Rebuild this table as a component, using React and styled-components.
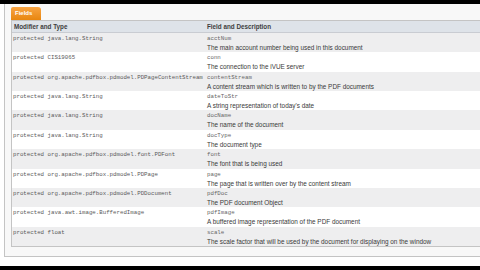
import React from "react";
import styled, { createGlobalStyle } from "styled-components";

const fields = [
  ["protected java.lang.String", "acctNum", "The main account number being used in this document"],
  ["protected CIS19065", "conn", "The connection to the iVUE server"],
  ["protected org.apache.pdfbox.pdmodel.PDPageContentStream", "contentStream", "A content stream which is written to by the PDF documents"],
  ["protected java.lang.String", "dateToStr", "A string representation of today's date"],
  ["protected java.lang.String", "docName", "The name of the document"],
  ["protected java.lang.String", "docType", "The document type"],
  ["protected org.apache.pdfbox.pdmodel.font.PDFont", "font", "The font that is being used"],
  ["protected org.apache.pdfbox.pdmodel.PDPage", "page", "The page that is written over by the content stream"],
  ["protected org.apache.pdfbox.pdmodel.PDDocument", "pdfDoc", "The PDF document Object"],
  ["protected java.awt.image.BufferedImage", "pdfImage", "A buffered image representation of the PDF document"],
  ["protected float", "scale", "The scale factor that will be used by the document for displaying on the window"],
];

const App = () => {
  return (
    <>
      <Global />
      <Screen>
        <Box>
          <Tab>Fields</Tab>
          <Table>
            <Header>
              <HeadCell>Modifier and Type</HeadCell>
              <HeadCell>Field and Description</HeadCell>
            </Header>
            {fields.map((f, i) => (
              <Row key={f[1]} $alt={i % 2 === 0}>
                <TypeCell>{f[0]}</TypeCell>
                <DescCell>
                  <Code>{f[1]}</Code>
                  <Text>{f[2]}</Text>
                </DescCell>
              </Row>
            ))}
          </Table>
        </Box>
      </Screen>
    </>
  );
};

export default App;

const Global = createGlobalStyle`
  html, body {
    margin: 0;
    padding: 0;
    background: #fff;
    overflow: hidden;
  }
`;

const Screen = styled.div`
  height: 270px;
  border-top: 4px solid #000;
  border-bottom: 4px solid #000;
  padding-left: 4px;
  box-sizing: border-box;
  background: #fff;
  overflow: hidden;
`;

const Box = styled.div`
  width: 600px;
  background: #f8f8f8;
  border-left: 1px solid #c4c4c4;
  border-bottom: 1px solid #c4c4c4;
  padding: 3px 0 9px 6px;
  font-family: "Liberation Sans", Arial, sans-serif;
`;

const Tab = styled.div`
  width: 30px;
  height: 13px;
  box-sizing: border-box;
  padding-left: 4px;
  background: linear-gradient(#f8a443, #e8860f);
  border-radius: 2px 3px 0 0;
  color: #fff;
  font-weight: bold;
  font-size: 6px;
  line-height: 13px;
`;

const Table = styled.div`
  border: 1px solid #c4c4c4;
  border-right: none;
  background: #fff;
`;

const Header = styled.div`
  display: grid;
  grid-template-columns: 193px 1fr;
  height: 11px;
  background: #dee3e9;
  border-bottom: 1px solid #c9ccd2;
`;

const HeadCell = styled.div`
  font-size: 6.3px;
  font-weight: bold;
  color: #3d3d3d;
  line-height: 11px;
  padding-left: 2px;
`;

const Row = styled.div`
  display: grid;
  grid-template-columns: 193px 1fr;
  height: 19.36px;
  background: ${(p) => (p.$alt ? "#eeeeef" : "#fff")};
`;

const TypeCell = styled.div`
  font-family: "Liberation Mono", "Courier New", monospace;
  font-size: 5.75px;
  color: #5a5a5a;
  line-height: 9px;
  padding: 1px 0 0 1px;
  white-space: nowrap;
`;

const DescCell = styled.div`
  padding: 1px 0 0 2px;
`;

const Code = styled.div`
  font-family: "Liberation Mono", "Courier New", monospace;
  font-size: 5.75px;
  color: #666;
  line-height: 9px;
`;

const Text = styled.div`
  font-size: 6.4px;
  color: #3a3a3a;
  line-height: 9px;
  white-space: nowrap;
`;
